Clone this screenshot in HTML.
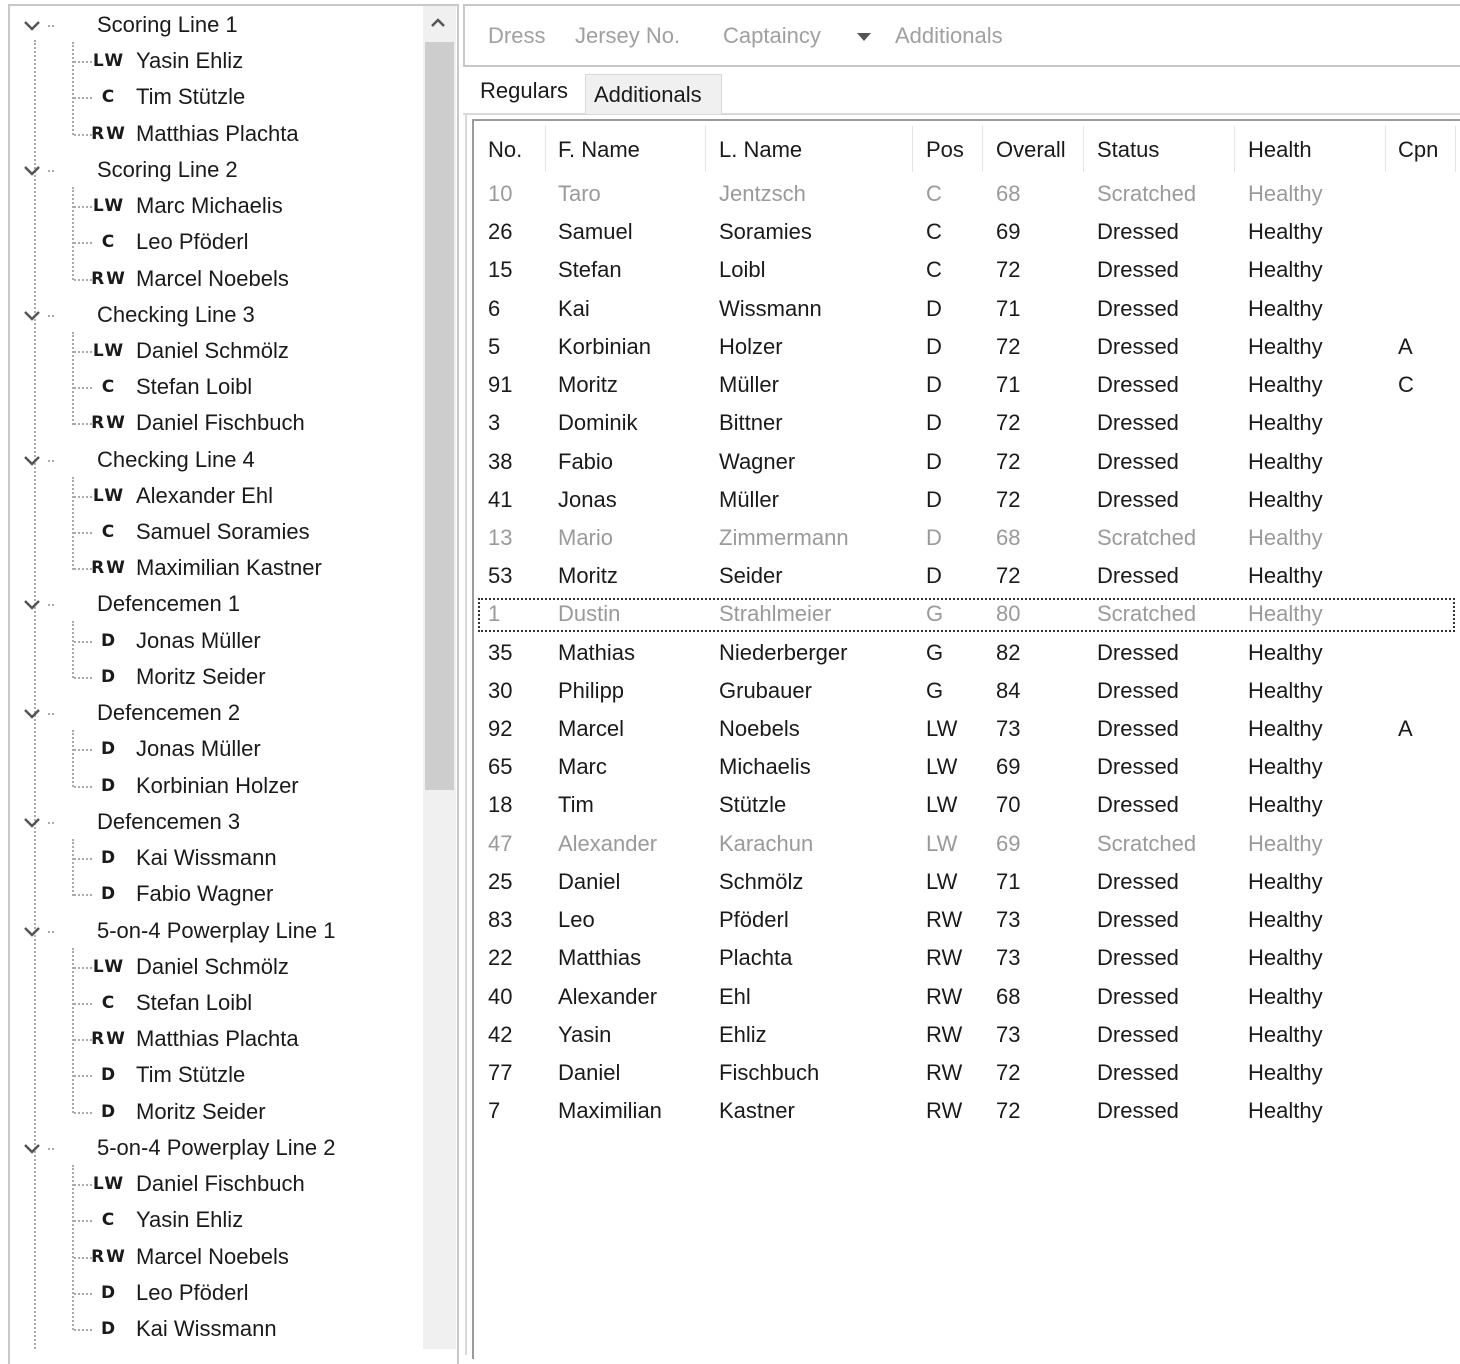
<!DOCTYPE html>
<html><head><meta charset="utf-8"><style>
*{margin:0;padding:0;box-sizing:border-box}
body{width:1460px;height:1349px;background:#fff;position:relative;overflow:hidden;font-family:"Liberation Sans",sans-serif;font-size:22px;color:#1a1a1a}
.a{position:absolute;white-space:nowrap}
.tr{position:absolute;left:0;height:30px;line-height:30px;width:460px}
.tr span{position:absolute}
.g{left:97px}
.dd{left:48px;width:10px;border-top:2px dotted #aaa;top:15px;height:0}
.h{left:74px;width:18px;border-top:2px dotted #aaa;top:15px;height:0}
.b{font-family:"DejaVu Sans","Liberation Sans",sans-serif;font-weight:bold;font-size:17px;width:36px;text-align:center;left:91px;letter-spacing:2px}
.n{left:136px}
.r{position:absolute;left:0;width:1460px;height:30px;line-height:30px}
.r span{position:absolute}
.c1{left:488px}.c2{left:558px}.c3{left:719px}.c4{left:926px}.c5{left:996px}.c6{left:1097px}.c7{left:1248px}.c8{left:1398px}
.s{color:#9a9a9a}
.sep{position:absolute;top:126px;width:1px;height:46px;background:#e5e5e5}
.vl{position:absolute;border-left:2px dotted #aaa;width:0}
</style></head><body>
<div class="a" style="left:8px;top:4px;width:451px;height:1360px;border:2px solid #c8c8c8;border-bottom:none"></div>
<div class="a" style="left:423px;top:6px;width:33px;height:1343px;background:#f0f0f0"></div>
<div class="a" style="left:425px;top:42px;width:29px;height:748px;background:#cdcdcd"></div>
<svg class="a" style="left:426px;top:12px" width="24" height="20"><path d="M6 14 L12 8 L18 14" stroke="#555" stroke-width="2.5" fill="none"/></svg>
<div class="vl" style="left:34px;top:40px;height:1309px"></div>
<div class="vl" style="left:72px;top:42px;height:93px"></div>
<div class="vl" style="left:72px;top:187px;height:93px"></div>
<div class="vl" style="left:72px;top:332px;height:93px"></div>
<div class="vl" style="left:72px;top:477px;height:93px"></div>
<div class="vl" style="left:72px;top:621px;height:57px"></div>
<div class="vl" style="left:72px;top:730px;height:57px"></div>
<div class="vl" style="left:72px;top:839px;height:57px"></div>
<div class="vl" style="left:72px;top:948px;height:165px"></div>
<div class="vl" style="left:72px;top:1165px;height:165px"></div>
<svg width="0" height="0" style="position:absolute"><defs><path id="cv" d="M2 4 L9 11 L16 4" stroke="#555" stroke-width="2.5" fill="none"/></defs></svg>

<div class="tr" style="top:10px"><svg class="a" style="left:23px;top:8px" width="18" height="14"><use href="#cv"/></svg><span class="dd" style="width:6px"></span><span class="g">Scoring Line 1</span></div>
<div class="tr" style="top:46px"><span class="h"></span><span class="b">LW</span><span class="n">Yasin Ehliz</span></div>
<div class="tr" style="top:82px"><span class="h"></span><span class="b">C</span><span class="n">Tim Stützle</span></div>
<div class="tr" style="top:119px"><span class="h"></span><span class="b">RW</span><span class="n">Matthias Plachta</span></div>
<div class="tr" style="top:155px"><svg class="a" style="left:23px;top:8px" width="18" height="14"><use href="#cv"/></svg><span class="dd" style="width:6px"></span><span class="g">Scoring Line 2</span></div>
<div class="tr" style="top:191px"><span class="h"></span><span class="b">LW</span><span class="n">Marc Michaelis</span></div>
<div class="tr" style="top:227px"><span class="h"></span><span class="b">C</span><span class="n">Leo Pföderl</span></div>
<div class="tr" style="top:264px"><span class="h"></span><span class="b">RW</span><span class="n">Marcel Noebels</span></div>
<div class="tr" style="top:300px"><svg class="a" style="left:23px;top:8px" width="18" height="14"><use href="#cv"/></svg><span class="dd" style="width:6px"></span><span class="g">Checking Line 3</span></div>
<div class="tr" style="top:336px"><span class="h"></span><span class="b">LW</span><span class="n">Daniel Schmölz</span></div>
<div class="tr" style="top:372px"><span class="h"></span><span class="b">C</span><span class="n">Stefan Loibl</span></div>
<div class="tr" style="top:408px"><span class="h"></span><span class="b">RW</span><span class="n">Daniel Fischbuch</span></div>
<div class="tr" style="top:445px"><svg class="a" style="left:23px;top:8px" width="18" height="14"><use href="#cv"/></svg><span class="dd" style="width:6px"></span><span class="g">Checking Line 4</span></div>
<div class="tr" style="top:481px"><span class="h"></span><span class="b">LW</span><span class="n">Alexander Ehl</span></div>
<div class="tr" style="top:517px"><span class="h"></span><span class="b">C</span><span class="n">Samuel Soramies</span></div>
<div class="tr" style="top:553px"><span class="h"></span><span class="b">RW</span><span class="n">Maximilian Kastner</span></div>
<div class="tr" style="top:589px"><svg class="a" style="left:23px;top:8px" width="18" height="14"><use href="#cv"/></svg><span class="dd" style="width:6px"></span><span class="g">Defencemen 1</span></div>
<div class="tr" style="top:626px"><span class="h"></span><span class="b">D</span><span class="n">Jonas Müller</span></div>
<div class="tr" style="top:662px"><span class="h"></span><span class="b">D</span><span class="n">Moritz Seider</span></div>
<div class="tr" style="top:698px"><svg class="a" style="left:23px;top:8px" width="18" height="14"><use href="#cv"/></svg><span class="dd" style="width:6px"></span><span class="g">Defencemen 2</span></div>
<div class="tr" style="top:734px"><span class="h"></span><span class="b">D</span><span class="n">Jonas Müller</span></div>
<div class="tr" style="top:771px"><span class="h"></span><span class="b">D</span><span class="n">Korbinian Holzer</span></div>
<div class="tr" style="top:807px"><svg class="a" style="left:23px;top:8px" width="18" height="14"><use href="#cv"/></svg><span class="dd" style="width:6px"></span><span class="g">Defencemen 3</span></div>
<div class="tr" style="top:843px"><span class="h"></span><span class="b">D</span><span class="n">Kai Wissmann</span></div>
<div class="tr" style="top:879px"><span class="h"></span><span class="b">D</span><span class="n">Fabio Wagner</span></div>
<div class="tr" style="top:916px"><svg class="a" style="left:23px;top:8px" width="18" height="14"><use href="#cv"/></svg><span class="dd" style="width:6px"></span><span class="g">5-on-4 Powerplay Line 1</span></div>
<div class="tr" style="top:952px"><span class="h"></span><span class="b">LW</span><span class="n">Daniel Schmölz</span></div>
<div class="tr" style="top:988px"><span class="h"></span><span class="b">C</span><span class="n">Stefan Loibl</span></div>
<div class="tr" style="top:1024px"><span class="h"></span><span class="b">RW</span><span class="n">Matthias Plachta</span></div>
<div class="tr" style="top:1060px"><span class="h"></span><span class="b">D</span><span class="n">Tim Stützle</span></div>
<div class="tr" style="top:1097px"><span class="h"></span><span class="b">D</span><span class="n">Moritz Seider</span></div>
<div class="tr" style="top:1133px"><svg class="a" style="left:23px;top:8px" width="18" height="14"><use href="#cv"/></svg><span class="dd" style="width:6px"></span><span class="g">5-on-4 Powerplay Line 2</span></div>
<div class="tr" style="top:1169px"><span class="h"></span><span class="b">LW</span><span class="n">Daniel Fischbuch</span></div>
<div class="tr" style="top:1205px"><span class="h"></span><span class="b">C</span><span class="n">Yasin Ehliz</span></div>
<div class="tr" style="top:1242px"><span class="h"></span><span class="b">RW</span><span class="n">Marcel Noebels</span></div>
<div class="tr" style="top:1278px"><span class="h"></span><span class="b">D</span><span class="n">Leo Pföderl</span></div>
<div class="tr" style="top:1314px"><span class="h"></span><span class="b">D</span><span class="n">Kai Wissmann</span></div>

<div class="a" style="left:463px;top:4px;width:1000px;height:63px;border:2px solid #c8c8c8;border-right:none"></div>
<div class="a" style="left:488px;top:21px;color:#a0a0a0;line-height:30px">Dress</div>
<div class="a" style="left:575px;top:21px;color:#a0a0a0;line-height:30px">Jersey No.</div>
<div class="a" style="left:723px;top:21px;color:#a0a0a0;line-height:30px">Captaincy</div>
<svg class="a" style="left:856px;top:32px" width="16" height="10"><path d="M1 1 L15 1 L8 9Z" fill="#555"/></svg>
<div class="a" style="left:895px;top:21px;color:#a0a0a0;line-height:30px">Additionals</div>
<div class="a" style="left:463px;top:113px;width:1000px;height:2px;background:#d9d9d9"></div>
<div class="a" style="left:585px;top:74px;width:137px;height:40px;background:#f0f0f0;border:1px solid #d9d9d9;border-bottom:none"></div>
<div class="a" style="left:480px;top:76px;line-height:30px">Regulars</div>
<div class="a" style="left:594px;top:80px;line-height:30px">Additionals</div>
<div class="a" style="left:465px;top:115px;width:2px;height:1240px;background:#d9d9d9"></div>
<div class="a" style="left:472px;top:119px;width:1000px;height:1240px;border:2px solid #9a9a9a;border-right:none;border-bottom:none"></div>
<div class="sep" style="left:545px"></div><div class="sep" style="left:705px"></div><div class="sep" style="left:912px"></div><div class="sep" style="left:982px"></div><div class="sep" style="left:1083px"></div><div class="sep" style="left:1234px"></div><div class="sep" style="left:1385px"></div><div class="sep" style="left:1455px"></div>
<div class="r" style="top:135px"><span class="c1">No.</span><span class="c2">F. Name</span><span class="c3">L. Name</span><span class="c4">Pos</span><span class="c5">Overall</span><span class="c6">Status</span><span class="c7">Health</span><span class="c8">Cpn</span></div>
<div class="r s" style="top:179px"><span class="c1">10</span><span class="c2">Taro</span><span class="c3">Jentzsch</span><span class="c4">C</span><span class="c5">68</span><span class="c6">Scratched</span><span class="c7">Healthy</span></div>
<div class="r" style="top:217px"><span class="c1">26</span><span class="c2">Samuel</span><span class="c3">Soramies</span><span class="c4">C</span><span class="c5">69</span><span class="c6">Dressed</span><span class="c7">Healthy</span></div>
<div class="r" style="top:255px"><span class="c1">15</span><span class="c2">Stefan</span><span class="c3">Loibl</span><span class="c4">C</span><span class="c5">72</span><span class="c6">Dressed</span><span class="c7">Healthy</span></div>
<div class="r" style="top:294px"><span class="c1">6</span><span class="c2">Kai</span><span class="c3">Wissmann</span><span class="c4">D</span><span class="c5">71</span><span class="c6">Dressed</span><span class="c7">Healthy</span></div>
<div class="r" style="top:332px"><span class="c1">5</span><span class="c2">Korbinian</span><span class="c3">Holzer</span><span class="c4">D</span><span class="c5">72</span><span class="c6">Dressed</span><span class="c7">Healthy</span><span class="c8">A</span></div>
<div class="r" style="top:370px"><span class="c1">91</span><span class="c2">Moritz</span><span class="c3">Müller</span><span class="c4">D</span><span class="c5">71</span><span class="c6">Dressed</span><span class="c7">Healthy</span><span class="c8">C</span></div>
<div class="r" style="top:408px"><span class="c1">3</span><span class="c2">Dominik</span><span class="c3">Bittner</span><span class="c4">D</span><span class="c5">72</span><span class="c6">Dressed</span><span class="c7">Healthy</span></div>
<div class="r" style="top:447px"><span class="c1">38</span><span class="c2">Fabio</span><span class="c3">Wagner</span><span class="c4">D</span><span class="c5">72</span><span class="c6">Dressed</span><span class="c7">Healthy</span></div>
<div class="r" style="top:485px"><span class="c1">41</span><span class="c2">Jonas</span><span class="c3">Müller</span><span class="c4">D</span><span class="c5">72</span><span class="c6">Dressed</span><span class="c7">Healthy</span></div>
<div class="r s" style="top:523px"><span class="c1">13</span><span class="c2">Mario</span><span class="c3">Zimmermann</span><span class="c4">D</span><span class="c5">68</span><span class="c6">Scratched</span><span class="c7">Healthy</span></div>
<div class="r" style="top:561px"><span class="c1">53</span><span class="c2">Moritz</span><span class="c3">Seider</span><span class="c4">D</span><span class="c5">72</span><span class="c6">Dressed</span><span class="c7">Healthy</span></div>
<div class="a" style="left:478px;top:598px;width:977px;height:34px;border:2px dotted #333"></div>
<div class="r s" style="top:599px"><span class="c1">1</span><span class="c2">Dustin</span><span class="c3">Strahlmeier</span><span class="c4">G</span><span class="c5">80</span><span class="c6">Scratched</span><span class="c7">Healthy</span></div>
<div class="r" style="top:638px"><span class="c1">35</span><span class="c2">Mathias</span><span class="c3">Niederberger</span><span class="c4">G</span><span class="c5">82</span><span class="c6">Dressed</span><span class="c7">Healthy</span></div>
<div class="r" style="top:676px"><span class="c1">30</span><span class="c2">Philipp</span><span class="c3">Grubauer</span><span class="c4">G</span><span class="c5">84</span><span class="c6">Dressed</span><span class="c7">Healthy</span></div>
<div class="r" style="top:714px"><span class="c1">92</span><span class="c2">Marcel</span><span class="c3">Noebels</span><span class="c4">LW</span><span class="c5">73</span><span class="c6">Dressed</span><span class="c7">Healthy</span><span class="c8">A</span></div>
<div class="r" style="top:752px"><span class="c1">65</span><span class="c2">Marc</span><span class="c3">Michaelis</span><span class="c4">LW</span><span class="c5">69</span><span class="c6">Dressed</span><span class="c7">Healthy</span></div>
<div class="r" style="top:790px"><span class="c1">18</span><span class="c2">Tim</span><span class="c3">Stützle</span><span class="c4">LW</span><span class="c5">70</span><span class="c6">Dressed</span><span class="c7">Healthy</span></div>
<div class="r s" style="top:829px"><span class="c1">47</span><span class="c2">Alexander</span><span class="c3">Karachun</span><span class="c4">LW</span><span class="c5">69</span><span class="c6">Scratched</span><span class="c7">Healthy</span></div>
<div class="r" style="top:867px"><span class="c1">25</span><span class="c2">Daniel</span><span class="c3">Schmölz</span><span class="c4">LW</span><span class="c5">71</span><span class="c6">Dressed</span><span class="c7">Healthy</span></div>
<div class="r" style="top:905px"><span class="c1">83</span><span class="c2">Leo</span><span class="c3">Pföderl</span><span class="c4">RW</span><span class="c5">73</span><span class="c6">Dressed</span><span class="c7">Healthy</span></div>
<div class="r" style="top:943px"><span class="c1">22</span><span class="c2">Matthias</span><span class="c3">Plachta</span><span class="c4">RW</span><span class="c5">73</span><span class="c6">Dressed</span><span class="c7">Healthy</span></div>
<div class="r" style="top:982px"><span class="c1">40</span><span class="c2">Alexander</span><span class="c3">Ehl</span><span class="c4">RW</span><span class="c5">68</span><span class="c6">Dressed</span><span class="c7">Healthy</span></div>
<div class="r" style="top:1020px"><span class="c1">42</span><span class="c2">Yasin</span><span class="c3">Ehliz</span><span class="c4">RW</span><span class="c5">73</span><span class="c6">Dressed</span><span class="c7">Healthy</span></div>
<div class="r" style="top:1058px"><span class="c1">77</span><span class="c2">Daniel</span><span class="c3">Fischbuch</span><span class="c4">RW</span><span class="c5">72</span><span class="c6">Dressed</span><span class="c7">Healthy</span></div>
<div class="r" style="top:1096px"><span class="c1">7</span><span class="c2">Maximilian</span><span class="c3">Kastner</span><span class="c4">RW</span><span class="c5">72</span><span class="c6">Dressed</span><span class="c7">Healthy</span></div>
</body></html>
